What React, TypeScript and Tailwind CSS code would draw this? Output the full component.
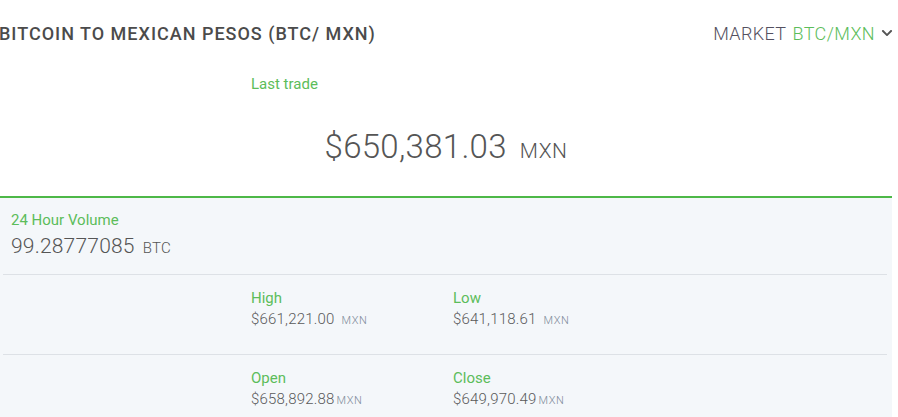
import { FaChevronDown } from "react-icons/fa";

const GREEN = "text-[#5cbd5a]";

function Stat({ label, value, unit, gap = "ml-[7px]" }: { label: string; value: string; unit: string; gap?: string }) {
  return (
    <div>
      <p className={`${GREEN} text-[15px] leading-[20px]`}>{label}</p>
      <p className="text-[#5a5a5a] text-[15px] leading-[22px] font-light tracking-[0.2px]">
        {value}
        <span className={`${gap} text-[11px] text-[#7d8a99] tracking-[0.5px]`}>{unit}</span>
      </p>
    </div>
  );
}

export default function App() {
  return (
    <div className="w-[898px] h-[417px] overflow-hidden bg-white font-['Roboto',sans-serif]">
      {/* Header */}
      <div className="h-[66px] flex items-center justify-between pr-[5px]">
        <h1 className="-ml-[1px] text-[18px] font-medium tracking-[1px] text-[#4b4b4b]">
          BITCOIN TO MEXICAN PESOS (BTC/ MXN)
        </h1>
        <button className="flex items-center gap-[6px] text-[18px] font-light tracking-[0.4px]">
          <span className="text-[#545060]">MARKET</span>
          <span className={GREEN}>BTC/MXN</span>
          <FaChevronDown size={12} className="text-[#555]" />
        </button>
      </div>

      {/* Last trade */}
      <div className="w-[892px] h-[130px] pt-[8px]">
        <p className={`${GREEN} pl-[251px] text-[15px] leading-[20px]`}>Last trade</p>
        <p className="mt-[33px] text-center text-[#555] text-[33px] leading-[40px] font-light tracking-[0.3px]">
          $650,381.03
          <span className="ml-[13px] text-[21px] tracking-[0.5px]">MXN</span>
        </p>
      </div>

      {/* Stats panel */}
      <div className="w-[892px] h-[221px] bg-[#f4f7fa] border-t-2 border-[#4db848]">
        <div className="mx-[3px] w-[884px] h-[77px] border-b border-[#dde1e6] pl-[8px] pt-[12px]">
          <p className={`${GREEN} text-[15px] leading-[20px]`}>24 Hour Volume</p>
          <p className="mt-[2px] text-[#555] text-[21px] leading-[28px] font-light tracking-[0.2px]">
            99.28777085
            <span className="ml-[8px] text-[15px] tracking-[0.3px]">BTC</span>
          </p>
        </div>
        <div className="mx-[3px] w-[884px] h-[80px] border-b border-[#dde1e6] pl-[248px] pt-[13px] grid grid-cols-[202px_1fr]">
          <Stat label="High" value="$661,221.00" unit="MXN" />
          <Stat label="Low" value="$641,118.61" unit="MXN" />
        </div>
        <div className="mx-[3px] w-[884px] pl-[248px] pt-[13px] grid grid-cols-[202px_1fr]">
          <Stat label="Open" value="$658,892.88" unit="MXN" gap="ml-[2px]" />
          <Stat label="Close" value="$649,970.49" unit="MXN" gap="ml-[2px]" />
        </div>
      </div>
    </div>
  );
}
